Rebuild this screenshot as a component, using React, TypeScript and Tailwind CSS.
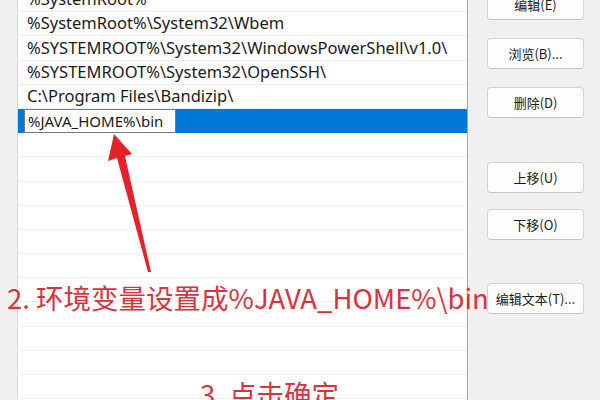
import React from 'react';

const paths = [
  '%SystemRoot%',
  '%SystemRoot%\\System32\\Wbem',
  '%SYSTEMROOT%\\System32\\WindowsPowerShell\\v1.0\\',
  '%SYSTEMROOT%\\System32\\OpenSSH\\',
  'C:\\Program Files\\Bandizip\\',
];

const Btn = ({ label, className = '' }: { label: string; className?: string }) => (
  <div
    className={`w-[97px] h-[31px] shrink-0 rounded-[4px] border border-[#d3d3d3] border-b-[#c4c4c4] bg-[#fdfdfd] flex items-center justify-center text-[13px] text-[#1a1a1a] ${className}`}
  >
    {label}
  </div>
);

const App: React.FC = () => {
  const empty = Array.from({ length: 11 });

  return (
    <div
      className="relative w-[600px] h-[400px] overflow-hidden bg-[#f0f0f0] flex"
      style={{ fontFamily: '"Noto Sans", "Noto Sans CJK SC", sans-serif' }}
    >
      {/* list box */}
      <div className="ml-[17px] w-[451px] h-full bg-white border-l border-l-[#d8d8d8] border-r border-r-[#a8a8a8] overflow-hidden">
        <div className="-mt-[12px]">
          {paths.map((p) => (
            <div
              key={p}
              className="h-[24.2px] box-border border-b border-[#efefef] pl-[9px] flex items-center text-[16.5px] text-[#1a1a1a] whitespace-nowrap"
            >
              {p}
            </div>
          ))}
          {/* selected row with inline edit */}
          <div className="h-[24.2px] box-border flex items-stretch bg-[#0078d7] pl-[6px]">
            <div className="w-[152px] bg-white border border-[#7a7a7a] pl-[3px] flex items-center text-[15px] text-[#1a1a1a] whitespace-nowrap">
              %JAVA_HOME%\bin
            </div>
          </div>
          {empty.map((_, i) => (
            <div key={i} className="h-[24.2px] box-border border-b border-[#efefef]" />
          ))}
        </div>
      </div>

      {/* button column */}
      <div
        className="ml-[19px] flex flex-col -mt-[11px]"
        style={{ fontFamily: '"Noto Sans CJK SC", "Noto Sans", sans-serif' }}
      >
        <Btn label="编辑(E)" />
        <Btn label="浏览(B)..." className="mt-[18px]" />
        <Btn label="删除(D)" className="mt-[18px]" />
        <Btn label="上移(U)" className="mt-[44px]" />
        <Btn label="下移(O)" className="mt-[16px]" />
        <Btn label="编辑文本(T)..." className="mt-[43px]" />
      </div>

      {/* annotations */}
      <svg className="absolute left-0 top-0" width="600" height="400" viewBox="0 0 600 400">
        <path
          d="M114 134 L132 154 L125 156 L151 272 L148 272 L117 158 L108 161 Z"
          fill="#e5212b"
        />
      </svg>
      <div
        className="absolute left-[7px] top-[277px] text-[27.5px] leading-[40px] text-[#d8323f] whitespace-nowrap"
        style={{ fontFamily: '"Noto Sans CJK SC", sans-serif' }}
      >
        2. 环境变量设置成%JAVA_HOME%\bin
      </div>
      <div
        className="absolute left-[200px] top-[373px] text-[27.5px] leading-[40px] text-[#d8323f] whitespace-nowrap"
        style={{ fontFamily: '"Noto Sans CJK SC", sans-serif' }}
      >
        3. 点击确定
      </div>
    </div>
  );
};

export default App;
